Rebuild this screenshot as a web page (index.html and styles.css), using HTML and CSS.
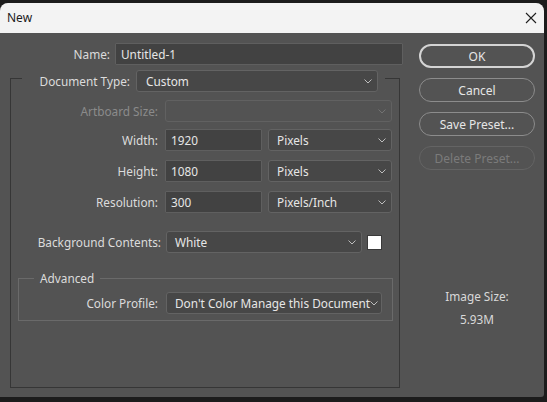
FILE: index.html
```html
<!DOCTYPE html>
<html lang="en">
<head>
    <meta charset="UTF-8">
    <meta name="viewport" content="width=device-width, initial-scale=1.0">
    <title>New</title>
    <link rel="stylesheet" href="styles.css">
</head>
<body>
    <div class="window">
        <div class="titlebar">
            <span class="title">New</span>
            <svg class="close" width="12" height="12" viewBox="0 0 12 12">
                <path d="M1 1 L11 11 M11 1 L1 11" stroke="#1f1f1f" stroke-width="1.1" fill="none"/>
            </svg>
        </div>

        <div class="dialog">
            <div class="main">
                <div class="name-row">
                    <label class="name-label">Name:</label>
                    <div class="field name-field">Untitled-1</div>
                </div>

                <fieldset class="doc-group">
                    <legend class="doc-legend">
                        <label class="legend-label">Document Type:</label>
                        <div class="select doc-select">
                            <span>Custom</span>
                            <svg class="caret" width="8" height="5" viewBox="0 0 8 5"><path d="M0.5 0.5 L4 4 L7.5 0.5" stroke="#bdbdbd" fill="none"/></svg>
                        </div>
                    </legend>

                    <div class="row row-artboard">
                        <label class="label disabled">Artboard Size:</label>
                        <div class="select select-disabled artboard-select">
                            <span></span>
                            <svg class="caret" width="8" height="5" viewBox="0 0 8 5"><path d="M0.5 0.5 L4 4 L7.5 0.5" stroke="#727272" fill="none"/></svg>
                        </div>
                    </div>

                    <div class="row row-width">
                        <label class="label">Width:</label>
                        <div class="field size-field">1920</div>
                        <div class="select unit-select">
                            <span>Pixels</span>
                            <svg class="caret" width="8" height="5" viewBox="0 0 8 5"><path d="M0.5 0.5 L4 4 L7.5 0.5" stroke="#bdbdbd" fill="none"/></svg>
                        </div>
                    </div>

                    <div class="row row-height">
                        <label class="label">Height:</label>
                        <div class="field size-field">1080</div>
                        <div class="select unit-select">
                            <span>Pixels</span>
                            <svg class="caret" width="8" height="5" viewBox="0 0 8 5"><path d="M0.5 0.5 L4 4 L7.5 0.5" stroke="#bdbdbd" fill="none"/></svg>
                        </div>
                    </div>

                    <div class="row row-resolution">
                        <label class="label">Resolution:</label>
                        <div class="field size-field">300</div>
                        <div class="select unit-select">
                            <span>Pixels/Inch</span>
                            <svg class="caret" width="8" height="5" viewBox="0 0 8 5"><path d="M0.5 0.5 L4 4 L7.5 0.5" stroke="#bdbdbd" fill="none"/></svg>
                        </div>
                    </div>

                    <div class="row row-background">
                        <label class="label label-bg">Background Contents:</label>
                        <div class="select bg-select">
                            <span>White</span>
                            <svg class="caret" width="8" height="5" viewBox="0 0 8 5"><path d="M0.5 0.5 L4 4 L7.5 0.5" stroke="#bdbdbd" fill="none"/></svg>
                        </div>
                        <div class="swatch"></div>
                    </div>

                    <fieldset class="advanced">
                        <legend class="advanced-legend">Advanced</legend>
                        <div class="row row-profile">
                            <label class="label label-adv">Color Profile:</label>
                            <div class="select profile-select">
                                <span>Don't Color Manage this Document</span>
                                <svg class="caret" width="8" height="5" viewBox="0 0 8 5"><path d="M0.5 0.5 L4 4 L7.5 0.5" stroke="#bdbdbd" fill="none"/></svg>
                            </div>
                        </div>
                    </fieldset>
                </fieldset>
            </div>

            <div class="side">
                <button class="btn btn-default">OK</button>
                <button class="btn">Cancel</button>
                <button class="btn">Save Preset...</button>
                <button class="btn" disabled>Delete Preset...</button>

                <div class="image-size">
                    <div>Image Size:</div>
                    <div class="image-size-value">5.93M</div>
                </div>
            </div>
        </div>
    </div>
</body>
</html>
```

FILE: styles.css
```css
* {
    margin: 0;
    padding: 0;
    box-sizing: border-box;
    font-family: 'Noto Sans', 'DejaVu Sans', sans-serif;
}
body {
    background-color: #1c1c1c;
    font-size: 11.8px;
    line-height: 16px;
    color: #dcdcdc;
    width: 547px;
    height: 402px;
    overflow: hidden;
}
.window {
    margin-top: 3px;
    width: 544px;
    height: 394px;
    border-radius: 8px 8px 3px 0;
    overflow: hidden;
    background-color: #535353;
}
.titlebar {
    height: 30px;
    background-color: #f3f3f3;
    display: flex;
    align-items: center;
    justify-content: space-between;
    padding: 0 7px 0 7px;
}
.title {
    color: #1b1b1b;
    font-size: 12px;
}
.dialog {
    display: flex;
    height: 364px;
}
.main {
    width: 404px;
    padding: 10px 0 0 10px;
}

/* Inputs */
.field,
.select {
    height: 22px;
    display: flex;
    align-items: center;
    color: #e6e6e6;
    white-space: nowrap;
}
.field {
    background-color: #424242;
    border: 1px solid #5f5f5f;
    border-radius: 1px;
    padding-left: 5px;
}
.select {
    background-color: #474747;
    border: 1px solid #636363;
    border-radius: 3px;
    padding: 0 5px 0 8px;
    justify-content: space-between;
}
.select-disabled {
    background-color: #535353;
    border-color: #616161;
}
.caret {
    flex-shrink: 0;
}

.name-row {
    display: flex;
    align-items: center;
    gap: 5px;
}
.name-label {
    width: 100px;
    text-align: right;
}
.name-field {
    width: 288px;
}

/* Document group */
.doc-group {
    width: 390px;
    height: 324px;
    margin-top: -1px;
    border: 1px solid #363636;
}
.doc-legend {
    display: flex;
    align-items: center;
    margin-left: 11px;
    padding: 6px 7px 0 0;
    gap: 6px;
}
.legend-label {
    width: 108px;
    text-align: right;
}
.doc-select {
    width: 242px;
    padding-left: 9px;
}

.row {
    display: flex;
    align-items: center;
    height: 22px;
}
.label {
    width: 148px;
    padding-right: 1px;
    text-align: right;
    margin-right: 6px;
}
.disabled {
    color: #8b8b8b;
}
.row-artboard {
    margin-top: 8px;
}
.row-width {
    margin-top: 7px;
}
.row-height,
.row-resolution {
    margin-top: 9px;
}
.row-background {
    margin-top: 18px;
}
.artboard-select {
    width: 227px;
}
.size-field {
    width: 97px;
    margin-right: 6px;
}
.unit-select {
    width: 124px;
}
.label-bg {
    width: 150px;
    padding-right: 0;
    margin-right: 5px;
}
.bg-select {
    width: 196px;
}
.swatch {
    width: 15px;
    height: 15px;
    margin-left: 5px;
    background-color: #ffffff;
    border: 1px solid #3a3a3a;
}

/* Advanced group */
.advanced {
    width: 375px;
    margin: 17px 0 0 7px;
    padding-bottom: 6px;
    border: 1px solid #6a6a6a;
}
.advanced-legend {
    margin-left: 15px;
    padding: 0 6px;
    line-height: 16px;
}
.row-profile {
    margin-top: 6px;
}
.label-adv {
    width: 140px;
    margin-right: 7px;
}
.profile-select {
    width: 216px;
}

/* Buttons */
.side {
    width: 131px;
    padding: 11px 0 0 15px;
    display: flex;
    flex-direction: column;
    gap: 10px;
}
.btn {
    width: 116px;
    height: 24px;
    border-radius: 12px;
    background-color: transparent;
    border: 1px solid #8c8c8c;
    color: #e6e6e6;
    font-size: 12px;
    cursor: pointer;
}
.btn-default {
    border: 2px solid #d4d4d4;
}
.btn:disabled {
    color: #7b7b7b;
    border-color: #646464;
    cursor: default;
}
.image-size {
    margin-top: 108px;
    text-align: center;
    width: 116px;
    color: #d9d9d9;
}
.image-size-value {
    margin-top: 7px;
}
```
